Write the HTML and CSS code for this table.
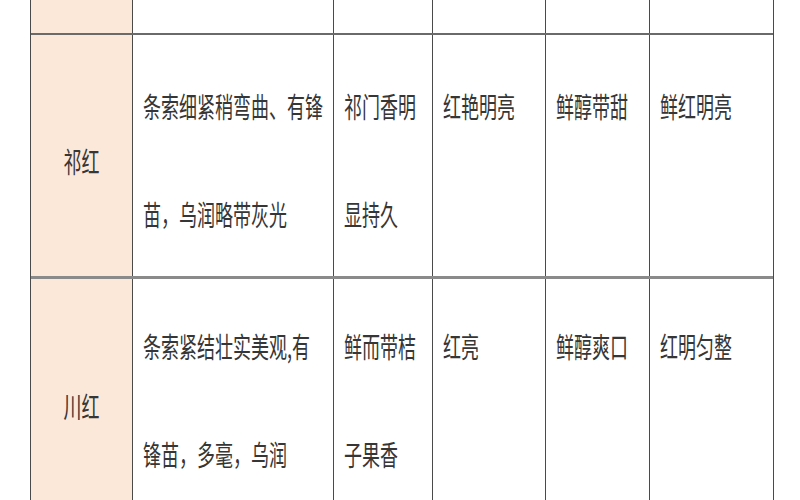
FILE: index.html
```html
<!DOCTYPE html>
<html lang="zh-CN">
<head>
<meta charset="utf-8">
<title>红茶品质对比</title>
<link rel="stylesheet" href="styles.css">
</head>
<body>
<div class="table">
  <div class="row row-top">
    <div class="cell name"></div>
    <div class="cell"></div>
    <div class="cell"></div>
    <div class="cell"></div>
    <div class="cell"></div>
    <div class="cell last"></div>
  </div>
  <div class="row row-a">
    <div class="cell name"><div class="ln">祁红</div></div>
    <div class="cell txt"><div class="ln">条索细紧稍弯曲、有锋</div><div class="ln">苗，乌润略带灰光</div></div>
    <div class="cell txt"><div class="ln">祁门香明</div><div class="ln">显持久</div></div>
    <div class="cell txt"><div class="ln">红艳明亮</div></div>
    <div class="cell txt"><div class="ln">鲜醇带甜</div></div>
    <div class="cell txt last"><div class="ln">鲜红明亮</div></div>
  </div>
  <div class="row row-b">
    <div class="cell name"><div class="ln">川红</div></div>
    <div class="cell txt"><div class="ln">条索紧结壮实美观,有</div><div class="ln">锋苗，多毫，乌润</div></div>
    <div class="cell txt"><div class="ln">鲜而带桔</div><div class="ln">子果香</div></div>
    <div class="cell txt"><div class="ln">红亮</div></div>
    <div class="cell txt"><div class="ln">鲜醇爽口</div></div>
    <div class="cell txt last"><div class="ln">红明匀整</div></div>
  </div>
</div>
</body>
</html>
```
FILE: styles.css
```css
html, body {
  margin: 0;
  padding: 0;
  background: #ffffff;
  overflow: hidden;
}

body {
  font-family: "Noto Sans CJK SC", "Noto Sans", sans-serif;
  font-size: 18px;
  color: #363636;
}

.table {
  margin-left: 30px;
  width: 742px;
  border-left: 1px solid #4a4a4a;
  border-right: 1px solid #4a4a4a;
}

.row {
  display: grid;
  grid-template-columns: 102px 201px 99px 113px 104px 123px;
}

.row-top {
  height: 35px;
  border-bottom: 2px solid #6a6a6a;
  box-sizing: border-box;
}

.row-a {
  height: 244px;
  border-bottom: 3px solid #8a8a8a;
  box-sizing: border-box;
}

.row-b {
  height: 240px;
}

.cell {
  border-right: 1px solid #4a4a4a;
  box-sizing: border-box;
}

.cell.last {
  border-right: none;
}

.name {
  background: #fce8d8;
  display: flex;
  align-items: center;
  justify-content: center;
}

.row-a .name {
  padding-top: 8px;
}

.row-b .name {
  padding-top: 12px;
}

.txt {
  padding-left: 10px;
}

.row-a .txt {
  padding-top: 16px;
}

.row-b .txt {
  padding-top: 12px;
}

.ln {
  line-height: 108px;
  white-space: nowrap;
  transform: scaleY(1.6);
}

.name .ln {
  line-height: 30px;
}
```
